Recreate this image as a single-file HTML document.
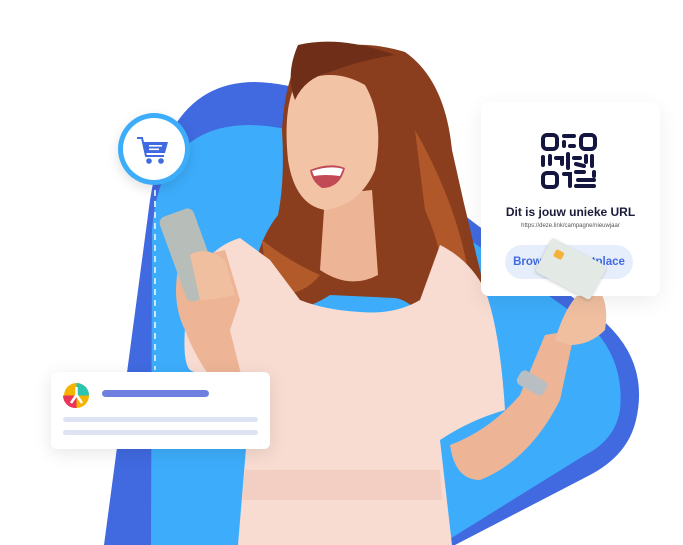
<!DOCTYPE html>
<html><head><style>
html,body{margin:0;padding:0;background:#fff;width:683px;height:545px;overflow:hidden;font-family:"Liberation Sans",sans-serif}
.abs{position:absolute}
</style></head><body>
<div class="abs" style="left:0;top:0;width:683px;height:545px">
<svg width="683" height="545" viewBox="0 0 683 545" style="position:absolute;left:0;top:0">
 <!-- dark blue shape -->
 <path d="M104,545 L150,200 Q168,82 255,82 Q330,84 370,140 L460,212 L600,318 Q650,360 636,420 Q628,455 590,475 L455,545 Z" fill="#416AE1"/>
 <!-- light blue -->
 <path d="M151,545 L152,230 Q160,125 250,125 Q320,127 360,170 L470,240 L590,325 Q625,360 620,410 Q615,440 585,455 L440,545 Z" fill="#3DADFB"/>
 <line x1="155" y1="190" x2="155" y2="370" stroke="#cfe6ff" stroke-width="2" stroke-dasharray="6,5"/>
 <!-- hair back -->
 <path d="M300,58 Q350,35 405,52 Q445,80 452,150 Q465,210 480,270 Q490,310 460,330 Q440,340 425,320 Q410,300 395,298 L330,295 Q300,315 275,305 Q250,295 255,265 Q262,235 278,215 Q285,180 282,130 Q285,80 300,58 Z" fill="#8A3E1E"/>
 <path d="M415,130 Q455,200 468,270 Q470,315 445,320 Q448,260 425,210 Z" fill="#B0582A"/>
 <path d="M262,240 Q290,262 320,275 Q300,300 268,292 Z" fill="#B25A2A"/>
 <!-- dress -->
 <path d="M240,238 Q200,250 188,300 Q180,360 190,370 L250,400 L238,545 L452,545 L440,440 Q470,420 505,410 Q500,330 485,290 Q470,260 440,245 L420,300 Q395,315 360,312 Q325,310 300,300 L270,260 Z" fill="#F8DCD2"/>
 <path d="M245,470 L440,470 L442,500 L242,500 Z" fill="#F3CEC2"/>
 <!-- neck/face -->
 <path d="M325,195 L372,190 L378,275 Q350,290 320,270 Z" fill="#EDB596"/>
 <path d="M295,85 Q330,65 365,85 Q385,120 375,170 Q360,205 325,210 Q295,205 288,160 Q283,110 295,85 Z" fill="#F2C3A5"/>
 <path d="M310,170 Q330,162 345,168 Q340,188 322,188 Q312,182 310,170 Z" fill="#C24A55"/>
 <path d="M312,171 Q330,165 343,169 L340,176 Q325,174 314,176 Z" fill="#fff"/>
 <path d="M298,45 Q340,35 395,55 Q360,60 330,72 Q305,78 295,100 Q285,75 298,45Z" fill="#6E2E18"/>
 <!-- right arm -->
 <path d="M450,445 Q490,430 520,395 L545,335 L575,330 L560,400 Q530,460 480,480 Q455,480 450,445 Z" fill="#EDB596"/>
 <path d="M555,340 Q570,290 595,285 Q610,300 605,330 Q590,345 570,345 Z" fill="#F0BFA0"/>
 <rect x="517" y="375" width="30" height="16" rx="5" fill="#B9BEC2" transform="rotate(30 532 383)"/>
 <!-- left hand + phone -->
 <path d="M180,260 Q170,300 185,330 Q200,370 230,400 L245,390 L230,330 L240,300 L225,250 Z" fill="#EDB596"/>
 <rect x="172" y="210" width="36" height="90" rx="7" fill="#B7BDB8" transform="rotate(-20 190 255)"/>
 <path d="M190,255 Q205,245 225,260 L235,295 Q215,300 200,300 Z" fill="#F0BFA0"/>
</svg>

<div class="abs" style="left:118px;top:113px;width:72px;height:72px;border-radius:50%;background:#3DADFB;box-shadow:0 4px 12px rgba(0,0,0,.12)"></div>
<div class="abs" style="left:123px;top:118px;width:62px;height:62px;border-radius:50%;background:#fff"></div>
<svg class="abs" style="left:136px;top:136px" width="34" height="30" viewBox="0 0 34 30">
 <path d="M1,2 L6,2 L10,20 L28,20" fill="none" stroke="#416AE1" stroke-width="2"/>
 <path d="M7,6 L32,6 L29,17 L10,17 Z" fill="#416AE1"/>
 <rect x="13" y="9" width="13" height="1.6" fill="#fff"/><rect x="13" y="12.5" width="10" height="1.6" fill="#fff"/>
 <circle cx="13" cy="25" r="2.8" fill="#416AE1"/><circle cx="25" cy="25" r="2.8" fill="#416AE1"/>
</svg>

<div class="abs" style="left:481px;top:102px;width:179px;height:194px;background:#fff;border-radius:8px;box-shadow:0 6px 22px rgba(0,0,0,.07)">
 <svg style="position:absolute;left:59px;top:30px" width="58" height="58" viewBox="0 0 58 58" fill="none" stroke="#14163F" stroke-width="4" stroke-linecap="round">
  <rect x="3" y="3" width="14" height="14" rx="4"/><rect x="41" y="3" width="14" height="14" rx="4"/><rect x="3" y="41" width="14" height="14" rx="4"/>
  <path d="M24,4 L34,4 M24,10 L24,14 M30,14 L34,14 M3,25 L3,33 M10,24 L10,32 M16,26 L22,26 L22,32 M28,22 L28,36 M34,26 L40,26 M46,24 L46,30 M52,24 L52,34 M24,42 L30,42 L30,54 M36,40 L44,40 M38,48 L54,48 M36,54 L54,54 M54,40 L54,44 M36,32 L44,34"/>
 </svg>
 <div style="position:absolute;left:0;top:103px;width:179px;text-align:center;font-size:12px;font-weight:bold;color:#1B1B3A">Dit is jouw unieke URL</div>
 <div style="position:absolute;left:0;top:121px;width:179px;text-align:center;font-size:6px;color:#555">https://deze.link/campagne/nieuwjaar</div>
 <div style="position:absolute;left:24px;top:143px;width:128px;height:34px;border-radius:17px;background:#E6EEFC;color:#416AE1;font-weight:bold;font-size:11.5px;line-height:34px;text-align:center">Browse marketplace</div>
</div>
<div class="abs" style="left:540px;top:250px;width:62px;height:38px;background:#E3E9E4;border-radius:3px;transform:rotate(28deg);box-shadow:0 1px 3px rgba(0,0,0,.2)"><div style="position:absolute;left:9px;top:8px;width:9px;height:8px;background:#F4B23A;border-radius:2px"></div></div>

<div class="abs" style="left:51px;top:372px;width:219px;height:77px;background:#fff;border-radius:6px;box-shadow:0 4px 18px rgba(0,0,0,.10)">
 <svg style="position:absolute;left:12px;top:11px" width="27" height="25" viewBox="0 0 27 25">
  <circle cx="13.5" cy="12.5" r="12.5" fill="#F4B400"/>
  <path d="M13.5,0 A12.5,12.5 0 0 1 26,12.5 L13.5,12.5Z" fill="#2BC4B0"/>
  <path d="M0,12.5 A12.5,12.5 0 0 0 13.5,25 L13.5,12.5Z" fill="#E9355A"/>
  <path d="M13.5,4 L13.5,14 M13.5,12 L8,20 M13.5,12 L19,20" stroke="#fff" stroke-width="2.5" fill="none"/>
 </svg>
 <div style="position:absolute;left:51px;top:18px;width:107px;height:7px;border-radius:4px;background:#6E7FE0"></div>
 <div style="position:absolute;left:12px;top:45px;width:195px;height:5px;border-radius:3px;background:#DEE3F3"></div>
 <div style="position:absolute;left:12px;top:58px;width:195px;height:5px;border-radius:3px;background:#DEE3F3"></div>
</div>
</div>
</body></html>
